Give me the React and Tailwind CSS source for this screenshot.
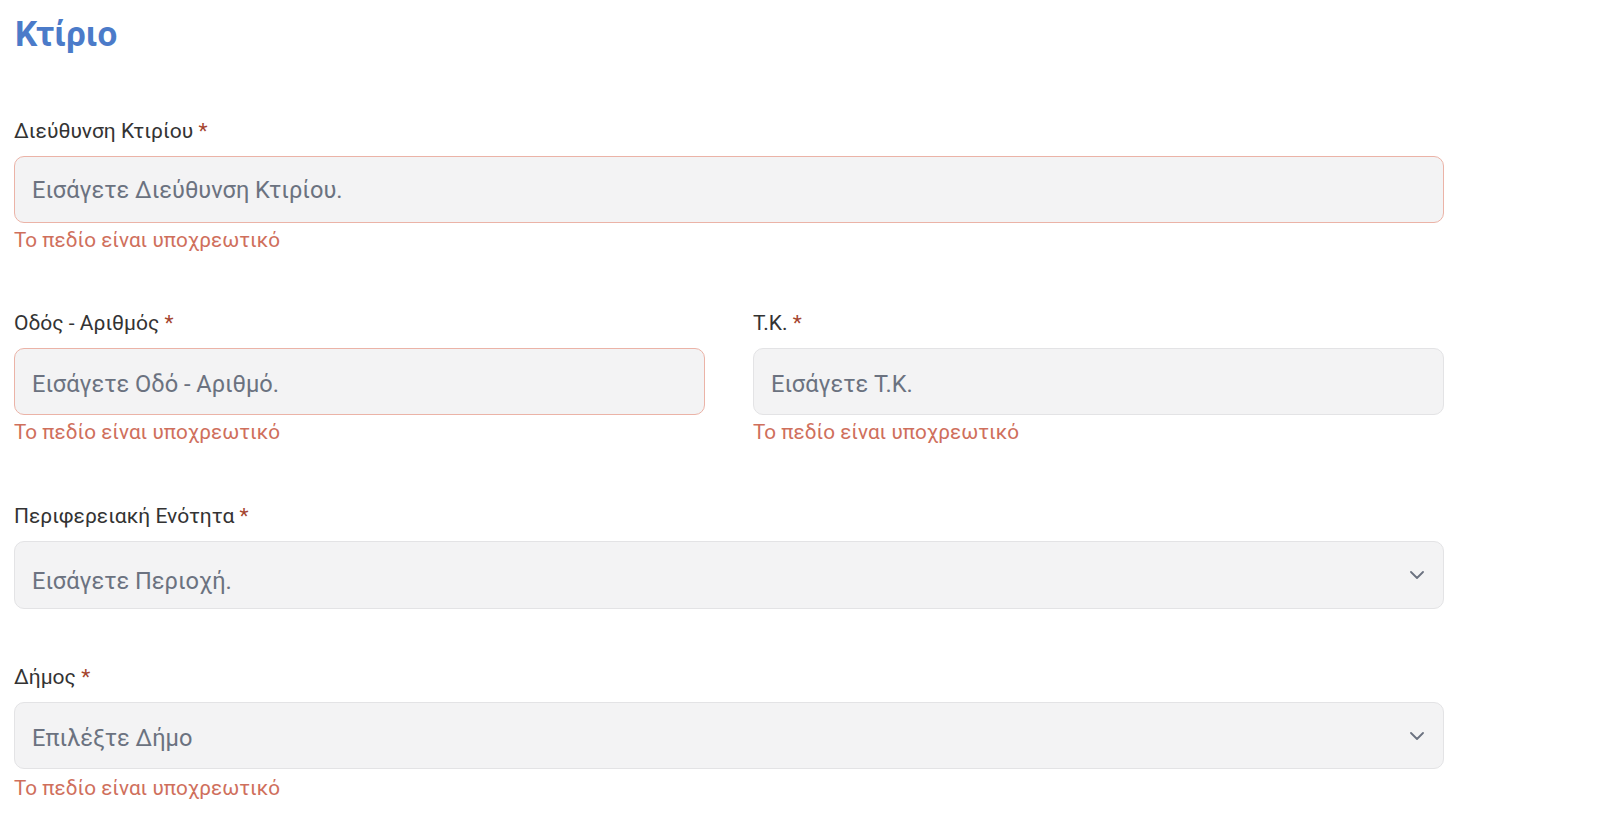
import React from "react";

const Chevron = () => (
  <svg width="14" height="8" viewBox="0 0 14 8" fill="none" className="shrink-0">
    <path d="M1 1l6 6 6-6" stroke="#6b7280" strokeWidth="1.8" strokeLinecap="round" strokeLinejoin="round" />
  </svg>
);

const Label = ({ children }) => (
  <div className="text-[21px] leading-[26px] text-[#333333] mb-[12px]">
    {children} <span className="text-[#a5452f]">*</span>
  </div>
);

const Err = ({ gap = "mt-[4px]" }) => (
  <div className={"text-[20.7px] leading-[26px] text-[#cf6f5c] " + gap}>Το πεδίο είναι υποχρεωτικό</div>
);

const Input = ({ placeholder, error, select, box, text }) => (
  <div
    className={
      "rounded-[10px] bg-[#f3f3f4] border flex items-center pl-[17px] pr-[19px] " +
      box +
      " " +
      (error ? "border-[#ebb3a7]" : "border-[#e3e3e5]")
    }
  >
    <span className={"flex-1 text-[23.6px] leading-[28px] text-[#6b7280] " + text}>{placeholder}</span>
    {select && <Chevron />}
  </div>
);

export default function App() {
  return (
    <div
      className="w-[1600px] h-[830px] bg-white pl-[14px] overflow-hidden"
      style={{ fontFamily: "Roboto, 'Noto Sans', sans-serif" }}
    >
      <div className="w-[1430px]">
        <h1 className="pt-[15px] pl-[1px] text-[35px] leading-[40px] font-bold text-[#4b7bc9]">Κτίριο</h1>

        <div className="mt-[63px]">
          <Label>Διεύθυνση Κτιρίου</Label>
          <Input box="h-[67px]" text="pt-[1px]" placeholder="Εισάγετε Διεύθυνση Κτιρίου." error />
          <Err />
        </div>

        <div className="mt-[57px] grid grid-cols-2 gap-x-[48px]">
          <div>
            <Label>Οδός - Αριθμός</Label>
            <Input box="h-[67px]" text="pt-[4px]" placeholder="Εισάγετε Οδό - Αριθμό." error />
            <Err />
          </div>
          <div>
            <Label>Τ.Κ.</Label>
            <Input box="h-[67px]" text="pt-[4px]" placeholder="Εισάγετε Τ.Κ." />
            <Err />
          </div>
        </div>

        <div className="mt-[58px]">
          <Label>Περιφερειακή Ενότητα</Label>
          <Input box="h-[68px]" text="pt-[12px]" placeholder="Εισάγετε Περιοχή." select />
        </div>

        <div className="mt-[55px]">
          <Label>Δήμος</Label>
          <Input box="h-[67px]" text="pt-[5px]" placeholder="Επιλέξτε Δήμο" select />
          <Err gap="mt-[6px]" />
        </div>
      </div>
    </div>
  );
}
